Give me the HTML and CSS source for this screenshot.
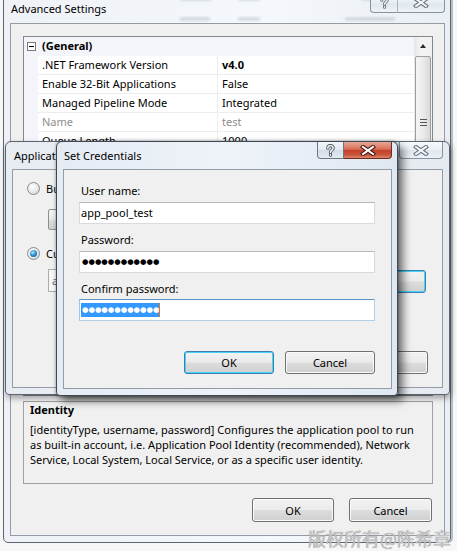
FILE: index.html
```html
<!DOCTYPE html>
<html>
<head>
<meta charset="utf-8">
<link rel="stylesheet" href="styles.css">
</head>
<body>
<div class="desk">
  <div class="win adv">
    <div class="titlebar">
      <div class="glass-blur">
        <span class="gb gb1"></span><span class="gb gb2"></span><span class="gb gb3"></span>
        <span class="gb gb4"></span><span class="gb gb5"></span><span class="gb gb6"></span>
      </div>
      <span class="title">Advanced Settings</span>
      <div class="caps">
        <span class="cap help">
          <svg width="9" height="13" viewBox="0 0 9 13"><path d="M1.8 4.2 C1.8 0.8 7.2 0.8 7.2 4 C7.2 6.2 4.5 6 4.5 8.4 M4.5 10.6 L4.5 11.2" fill="none" stroke="#6c7682" stroke-width="3.2" stroke-linecap="round"/><path d="M1.8 4.2 C1.8 0.8 7.2 0.8 7.2 4 C7.2 6.2 4.5 6 4.5 8.4 M4.5 10.6 L4.5 11.2" fill="none" stroke="#f4f6f9" stroke-width="1.4" stroke-linecap="round"/></svg>
        </span>
        <span class="cap close">
          <svg width="16" height="11" viewBox="0 0 16 11"><path d="M3 2 L13 9 M13 2 L3 9" stroke="#6c7682" stroke-width="4.2" stroke-linecap="square"/><path d="M3 2 L13 9 M13 2 L3 9" stroke="#f4f6f9" stroke-width="2" stroke-linecap="square"/></svg>
        </span>
      </div>
    </div>
    <div class="client">
      <div class="grid">
        <div class="rows">
          <div class="row cat"><span class="gutter"><span class="minus"></span></span><span class="name">(General)</span></div>
          <div class="row"><span class="gutter"></span><span class="name">.NET Framework Version</span><span class="val bold">v4.0</span></div>
          <div class="row"><span class="gutter"></span><span class="name">Enable 32-Bit Applications</span><span class="val">False</span></div>
          <div class="row"><span class="gutter"></span><span class="name">Managed Pipeline Mode</span><span class="val">Integrated</span></div>
          <div class="row ro"><span class="gutter"></span><span class="name">Name</span><span class="val">test</span></div>
          <div class="row"><span class="gutter"></span><span class="name">Queue Length</span><span class="val">1000</span></div>
          <div class="row"><span class="gutter"></span><span class="name">Start Automatically</span><span class="val">True</span></div>
          <div class="row cat"><span class="gutter"><span class="minus"></span></span><span class="name">CPU</span></div>
          <div class="row"><span class="gutter"></span><span class="name">Limit</span><span class="val">0</span></div>
          <div class="row"><span class="gutter"></span><span class="name">Limit Action</span><span class="val">NoAction</span></div>
          <div class="row"><span class="gutter"></span><span class="name">Limit Interval (minutes)</span><span class="val">5</span></div>
          <div class="row"><span class="gutter"></span><span class="name">Processor Affinity Enabled</span><span class="val">False</span></div>
          <div class="row"><span class="gutter"></span><span class="name">Processor Affinity Mask</span><span class="val">4294967295</span></div>
          <div class="row cat"><span class="gutter"><span class="minus"></span></span><span class="name">Process Model</span></div>
          <div class="row"><span class="gutter"></span><span class="name">Identity</span><span class="val">ApplicationPoolIdentity</span></div>
          <div class="row"><span class="gutter"></span><span class="name">Idle Time-out (minutes)</span><span class="val">20</span></div>
          <div class="row"><span class="gutter"></span><span class="name">Load User Profile</span><span class="val">False</span></div>
          <div class="row"><span class="gutter"></span><span class="name">Maximum Worker Processes</span><span class="val">1</span></div>
        </div>
        <div class="vscroll">
          <div class="sb-up"><span class="tri"></span></div>
          <div class="thumb"><span class="grip"></span></div>
        </div>
      </div>
      <div class="desc">
        <div class="desc-title">Identity</div>
        <p class="desc-text">[identityType, username, password] Configures the application pool to run as built-in account, i.e. Application Pool Identity (recommended), Network Service, Local System, Local Service, or as a specific user identity.</p>
      </div>
      <div class="btnrow adv-btns">
        <button class="btn w82">OK</button>
        <button class="btn w83">Cancel</button>
      </div>
    </div>
  </div>

  <div class="win apd">
    <div class="titlebar">
      <span class="title">Application Pool Identity</span>
      <div class="caps">
        <span class="cap close solo">
          <svg width="16" height="11" viewBox="0 0 16 11"><path d="M3 2 L13 9 M13 2 L3 9" stroke="#6c7682" stroke-width="4.2" stroke-linecap="square"/><path d="M3 2 L13 9 M13 2 L3 9" stroke="#f4f6f9" stroke-width="2" stroke-linecap="square"/></svg>
        </span>
      </div>
    </div>
    <div class="client apd-client">
      <div class="radio-row r1"><span class="radio"></span><span>Built-in account:</span></div>
      <div class="combo">ApplicationPoolIdentity</div>
      <div class="radio-row r2"><span class="radio on"></span><span>Custom account:</span></div>
      <div class="custom-row">
        <div class="ro-box">app_pool_test</div>
        <button class="btn def setbtn">Set...</button>
      </div>
      <div class="btnrow apd-btns">
        <button class="btn w80">OK</button>
        <button class="btn w100">Cancel</button>
      </div>
    </div>
  </div>

  <div class="win sc">
    <div class="titlebar">
      <span class="title">Set Credentials</span>
      <div class="caps">
        <span class="cap help act">
          <svg width="9" height="13" viewBox="0 0 9 13"><path d="M1.8 4.2 C1.8 0.8 7.2 0.8 7.2 4 C7.2 6.2 4.5 6 4.5 8.4 M4.5 10.6 L4.5 11.2" fill="none" stroke="#4b5561" stroke-width="3.2" stroke-linecap="round"/><path d="M1.8 4.2 C1.8 0.8 7.2 0.8 7.2 4 C7.2 6.2 4.5 6 4.5 8.4 M4.5 10.6 L4.5 11.2" fill="none" stroke="#ffffff" stroke-width="1.4" stroke-linecap="round"/></svg>
        </span>
        <span class="cap close red">
          <svg width="16" height="11" viewBox="0 0 16 11"><path d="M3 2 L13 9 M13 2 L3 9" stroke="#4a1d16" stroke-width="4.2" stroke-linecap="square"/><path d="M3 2 L13 9 M13 2 L3 9" stroke="#ffffff" stroke-width="2" stroke-linecap="square"/></svg>
        </span>
      </div>
    </div>
    <div class="client sc-client">
      <label class="lbl first">User name:</label>
      <div class="tb">app_pool_test</div>
      <label class="lbl">Password:</label>
      <div class="tb"><span class="dots">●●●●●●●●●●●●</span></div>
      <label class="lbl">Confirm password:</label>
      <div class="tb focus tb3"><span class="dots sel">●●●●●●●●●●●●</span><span class="caret"></span></div>
      <div class="btnrow sc-btns">
        <button class="btn def w90">OK</button>
        <button class="btn w90">Cancel</button>
      </div>
    </div>
  </div>

  <div class="watermark">版权所有@陈希章</div>
</div>
</body>
</html>
```

FILE: styles.css
```css
* { box-sizing: border-box; }
html, body { margin: 0; padding: 0; }
body {
  width: 457px;
  height: 551px;
  overflow: hidden;
  background: #ffffff;
  font-family: "Noto Sans", "Open Sans", "DejaVu Sans", sans-serif;
  font-size: 11px;
  color: #000;
}
.desk {
  position: relative;
  width: 457px;
  height: 551px;
  overflow: hidden;
  background: #f7f7f7;
}

/* ---------- generic window ---------- */
.win {
  position: absolute;
  display: flex;
  flex-direction: column;
}
.titlebar {
  position: relative;
  display: flex;
  justify-content: space-between;
  align-items: flex-start;
  flex: none;
}
.title {
  line-height: 15px;
  white-space: nowrap;
  color: #000;
  position: relative;
}
.caps { display: flex; position: relative; }
.cap {
  display: flex;
  align-items: center;
  justify-content: center;
  border: 1px solid #8593a3;
  border-top: none;
  background: linear-gradient(#f7f9fc, #e9eef4 50%, #dfe6ee 51%, #eef2f7);
}
.cap.help { border-radius: 0 0 0 4px; border-right: 1px solid #a9b4c1; }
.cap.close { border-left: none; border-radius: 0 0 4px 0; }
.cap.close.solo { border-left: 1px solid #8593a3; border-radius: 0 0 4px 4px; }
.client {
  background: #f0f0f0;
  border: 1px solid #939ba5;
  display: flex;
  flex-direction: column;
  flex: none;
}

/* ---------- Advanced Settings ---------- */
.adv {
  left: 3px;
  top: -8px;
  width: 448px;
  height: 551px;
  background: linear-gradient(90deg, #eef2f7, #f4f7fb 60%, #eaeff5);
  border: 1px solid #5d656f;
  border-radius: 0 0 5px 5px;
  padding: 0 5px 6px 6px;
  box-shadow: 2px 0 0 #b9bec5;
}
.adv .titlebar { height: 30px; }
.adv .title { margin-top: 8px; padding-left: 1px; }
.adv .cap.help { width: 28px; height: 20px; }
.adv .cap.close { width: 47px; height: 20px; }
.glass-blur {
  position: absolute;
  inset: 0;
  overflow: hidden;
  filter: blur(1.6px);
}
.gb { position: absolute; height: 3px; background: rgba(120,132,148,0.45); border-radius: 2px; }
.gb1 { left: 170px; top: 4px; width: 32px; }
.gb2 { left: 228px; top: 4px; width: 22px; }
.gb3 { left: 352px; top: 4px; width: 40px; }
.gb4 { left: 170px; top: 25px; width: 30px; height: 2px; }
.gb5 { left: 228px; top: 25px; width: 22px; height: 2px; }
.gb6 { left: 335px; top: 25px; width: 50px; height: 2px; }

.adv .client { height: 513px; }
.grid {
  margin: 12px 11px 0 12px;
  height: 360px;
  border: 1px solid #828790;
  background: #fff;
  display: flex;
  overflow: hidden;
  flex: none;
}
.rows { flex: 1; display: flex; flex-direction: column; }
.row {
  height: 19px;
  display: flex;
  flex: none;
}
.gutter {
  width: 14px;
  flex: none;
  background: #f3f5fa;
  display: flex;
  align-items: center;
  justify-content: center;
}
.minus {
  width: 9px;
  height: 9px;
  border: 1px solid #7a7a7a;
  background: #fff;
  position: relative;
  margin-left: 1px;
}
.minus::after {
  content: "";
  position: absolute;
  left: 1px;
  top: 3px;
  width: 5px;
  height: 1px;
  background: #000;
}
.name {
  width: 180px;
  flex: none;
  padding-left: 4px;
  line-height: 18px;
  border-bottom: 1px solid #ededed;
  border-right: 1px solid #ededed;
  white-space: nowrap;
  overflow: hidden;
}
.val {
  flex: 1;
  padding-left: 4px;
  line-height: 18px;
  border-bottom: 1px solid #ededed;
  white-space: nowrap;
}
.bold { font-weight: bold; }
.row.cat { background: #f3f5fa; }
.row.cat .name { font-weight: bold; border: none; width: auto; flex: 1; }
.row.ro .name, .row.ro .val { color: #8d8d8d; }

.vscroll {
  width: 18px;
  flex: none;
  background: linear-gradient(90deg, #e6e6e8, #f4f4f5 40%, #f0f0f0);
  display: flex;
  flex-direction: column;
  align-items: center;
}
.sb-up {
  height: 18px;
  width: 100%;
  display: flex;
  align-items: center;
  justify-content: center;
  flex: none;
}
.tri {
  width: 0;
  height: 0;
  border-left: 3.5px solid transparent;
  border-right: 3.5px solid transparent;
  border-bottom: 4px solid #2b2b2b;
}
.thumb {
  width: 16px;
  height: 132px;
  margin-top: 1px;
  border: 1px solid #9a9fa6;
  border-radius: 2px;
  background: linear-gradient(90deg, #f5f5f5, #ececec 45%, #d9d9d9);
  display: flex;
  align-items: center;
  justify-content: center;
  flex: none;
}
.grip {
  width: 7px;
  height: 7px;
  background: repeating-linear-gradient(#555 0 1px, transparent 1px 3px);
}

.desc {
  margin: 5px 11px 0 12px;
  height: 83px;
  border: 1px solid #a0a0a0;
  padding: 0 6px;
  flex: none;
}
.desc-title { font-weight: bold; line-height: 15px; }
.desc-text { margin: 5px 0 0; line-height: 15px; }

.btnrow { display: flex; justify-content: flex-end; flex: none; }
.adv-btns { margin: 14px 12px 0 0; gap: 15px; }

.btn {
  font-family: inherit;
  font-size: 11px;
  color: #000;
  height: 24px;
  padding: 0;
  border: 1px solid #707070;
  border-radius: 3px;
  background: linear-gradient(#f2f2f2, #ebebeb 48%, #dddddd 52%, #cfcfcf);
  box-shadow: inset 0 0 0 1px #fbfbfb;
}
.btn.def {
  border-color: #3c7fb1;
  box-shadow: inset 0 0 0 1px #48d3f7;
}
.w80 { width: 80px; }
.w82 { width: 82px; }
.w83 { width: 83px; }
.w90 { width: 90px; }
.w100 { width: 100px; }

/* ---------- Application Pool Identity ---------- */
.apd {
  left: 5px;
  top: 141px;
  width: 445px;
  height: 254px;
  background: linear-gradient(90deg, #e7ecf2, #f1f4f8 60%, #e5eaf0);
  border: 1px solid #5a636e;
  border-radius: 6px 6px 4px 4px;
  padding: 0 6px 6px 6px;
  box-shadow: 1px 3px 6px rgba(0,0,0,0.35);
}
.apd .titlebar { height: 27px; }
.apd .title { margin-top: 6px; padding-left: 2px; }
.apd .cap.close { width: 44px; height: 17px; }
.apd-client { height: 219px; padding: 12px 14px 0 14px; }
.radio-row {
  display: flex;
  align-items: center;
  gap: 6px;
  height: 13px;
  line-height: 15px;
}
.r2 { margin-top: 17px; }
.radio {
  width: 13px;
  height: 13px;
  border-radius: 50%;
  border: 1px solid #8a8a8a;
  background: radial-gradient(circle at 40% 35%, #ffffff, #e8e8e8 55%, #c9c9c9);
  position: relative;
  flex: none;
}
.radio.on::after {
  content: "";
  position: absolute;
  left: 2px;
  top: 2px;
  width: 7px;
  height: 7px;
  border-radius: 50%;
  background: radial-gradient(circle at 40% 35%, #a8e6ff, #1f84c9 55%, #0c4c86);
}
.combo {
  margin: 14px 0 0 21px;
  width: 330px;
  height: 21px;
  border: 1px solid #8f8f8f;
  border-radius: 2px;
  background: linear-gradient(#f2f2f2, #ebebeb 48%, #dddddd 52%, #cfcfcf);
  line-height: 19px;
  padding-left: 12px;
  flex: none;
}
.custom-row {
  display: flex;
  margin: 9px 0 0 21px;
  gap: 7px;
  flex: none;
}
.ro-box {
  width: 285px;
  height: 23px;
  border: 1px solid #acacac;
  background: #f7f7f7;
  color: #6d6d6d;
  line-height: 21px;
  padding-left: 3px;
}
.setbtn { width: 86px; height: 23px; margin-top: 1px; }
.apd-btns { margin-top: 58px; gap: 10px; }
.apd-btns .btn { height: 23px; }

/* ---------- Set Credentials ---------- */
.sc {
  left: 56px;
  top: 141px;
  width: 342px;
  height: 255px;
  background: linear-gradient(90deg, #e4ebf3, #eef3f9 50%, #dfe8f2);
  border: 1px solid #3f4852;
  border-radius: 6px 6px 4px 4px;
  padding: 0 5px 6px 6px;
  box-shadow: 5px 5px 9px rgba(0,0,0,0.55), 0 0 3px rgba(0,0,0,0.35);
}
.sc .titlebar { height: 27px; }
.sc .title { margin-top: 6px; padding-left: 1px; }
.sc .cap.help { width: 27px; height: 17px; background: linear-gradient(#f3f6fa, #e3e9f0 50%, #d3dce7 51%, #e4eaf1); border-color: #6b7786; }
.sc .cap.close { width: 48px; height: 17px; }
.cap.red {
  border-color: #6e2a20;
  background: linear-gradient(#e9a897, #d76f58 45%, #c4422b 52%, #c9533a 80%, #dc8a6b);
}
.sc-client { height: 220px; padding: 13px 16px 0 15px; }
.lbl { display: block; line-height: 15px; padding-left: 2px; margin-top: 8px; }
.lbl.first { margin-top: 0; }
.tb {
  margin-top: 4px;
  height: 22px;
  background: #fff;
  border: 1px solid #dadada;
  border-top-color: #b9b9b9;
  line-height: 20px;
  padding-left: 1px;
  display: flex;
  align-items: center;
  flex: none;
}
.tb3 { margin-top: 3px; }
.tb.focus {
  border-color: #b5cfe7;
  border-top-color: #5f95c3;
  border-left-color: #a4c3df;
}
.dots {
  font-family: "DejaVu Sans", sans-serif;
  font-size: 7.4px;
  line-height: 14px;
  letter-spacing: 0;
  padding-left: 1px;
  color: #000;
}
.dots.sel { background: #3399ff; color: #fff; }
.caret { width: 1px; height: 14px; background: #e8731e; }
.sc-btns { margin-top: 30px; gap: 11px; }
.sc-btns .btn { height: 23px; }

/* ---------- watermark ---------- */
.watermark {
  position: absolute;
  right: 6px;
  bottom: 1px;
  font-family: "Noto Sans CJK SC", sans-serif;
  font-size: 18px;
  line-height: 24px;
  color: #c4c4c4;
  text-shadow: 0 0 1px #8a8a8a;
  white-space: nowrap;
}
```
